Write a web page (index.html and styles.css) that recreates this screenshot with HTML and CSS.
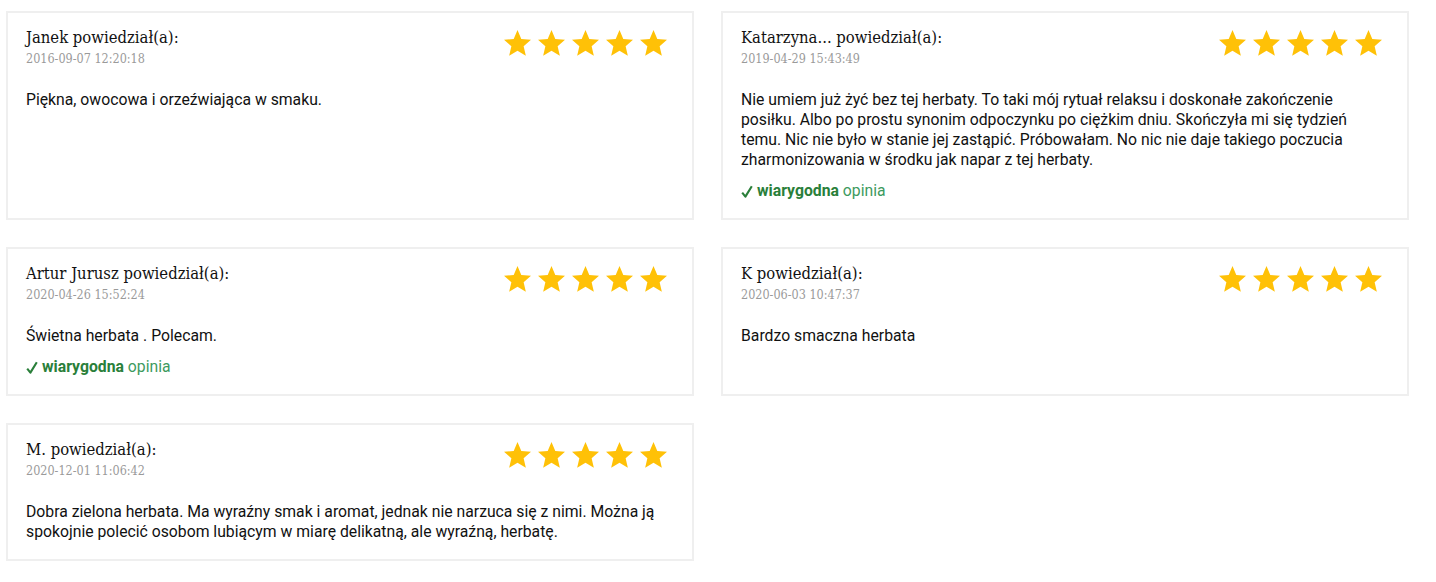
FILE: index.html
```html
<!DOCTYPE html>
<html lang="pl">
<head>
<meta charset="utf-8">
<title>Opinie</title>
<link rel="stylesheet" href="styles.css">
</head>
<body>
<svg width="0" height="0" class="defs">
  <defs>
    <symbol id="star" viewBox="2 2 20 19.2">
      <path d="M12 17.27L18.18 21l-1.64-7.03L22 9.24l-7.19-.61L12 2 9.19 8.63 2 9.24l5.46 4.73L5.82 21z"/>
    </symbol>
    <symbol id="check" viewBox="0 0 12 13">
      <polyline points="1.2,7.6 4.4,11.6 10.8,1.2" fill="none" stroke="currentColor" stroke-width="2.1" stroke-linejoin="round"/>
    </symbol>
  </defs>
</svg>
<div class="reviews">
  <div class="review">
    <div class="head">
      <div class="who">
        <div class="name">Janek powiedział(a):</div>
        <div class="date">2016-09-07 12:20:18</div>
      </div>
      <div class="stars"><svg><use href="#star"/></svg><svg><use href="#star"/></svg><svg><use href="#star"/></svg><svg><use href="#star"/></svg><svg><use href="#star"/></svg></div>
    </div>
    <p class="text">Piękna, owocowa i orzeźwiająca w smaku.</p>
  </div>
  <div class="review">
    <div class="head">
      <div class="who">
        <div class="name">Katarzyna... powiedział(a):</div>
        <div class="date">2019-04-29 15:43:49</div>
      </div>
      <div class="stars"><svg><use href="#star"/></svg><svg><use href="#star"/></svg><svg><use href="#star"/></svg><svg><use href="#star"/></svg><svg><use href="#star"/></svg></div>
    </div>
    <p class="text">Nie umiem już żyć bez tej herbaty. To taki mój rytuał relaksu i doskonałe zakończenie posiłku. Albo po prostu synonim odpoczynku po ciężkim dniu. Skończyła mi się tydzień temu. Nic nie było w stanie jej zastąpić. Próbowałam. No nic nie daje takiego poczucia zharmonizowania w środku jak napar z tej herbaty.</p>
    <div class="verified"><svg class="check"><use href="#check"/></svg><b>wiarygodna</b> opinia</div>
  </div>
  <div class="review">
    <div class="head">
      <div class="who">
        <div class="name">Artur Jurusz powiedział(a):</div>
        <div class="date">2020-04-26 15:52:24</div>
      </div>
      <div class="stars"><svg><use href="#star"/></svg><svg><use href="#star"/></svg><svg><use href="#star"/></svg><svg><use href="#star"/></svg><svg><use href="#star"/></svg></div>
    </div>
    <p class="text">Świetna herbata . Polecam.</p>
    <div class="verified"><svg class="check"><use href="#check"/></svg><b>wiarygodna</b> opinia</div>
  </div>
  <div class="review">
    <div class="head">
      <div class="who">
        <div class="name">K powiedział(a):</div>
        <div class="date">2020-06-03 10:47:37</div>
      </div>
      <div class="stars"><svg><use href="#star"/></svg><svg><use href="#star"/></svg><svg><use href="#star"/></svg><svg><use href="#star"/></svg><svg><use href="#star"/></svg></div>
    </div>
    <p class="text">Bardzo smaczna herbata</p>
  </div>
  <div class="review">
    <div class="head">
      <div class="who">
        <div class="name">M. powiedział(a):</div>
        <div class="date">2020-12-01 11:06:42</div>
      </div>
      <div class="stars"><svg><use href="#star"/></svg><svg><use href="#star"/></svg><svg><use href="#star"/></svg><svg><use href="#star"/></svg><svg><use href="#star"/></svg></div>
    </div>
    <p class="text">Dobra zielona herbata. Ma wyraźny smak i aromat, jednak nie narzuca się z nimi. Można ją spokojnie polecić osobom lubiącym w miarę delikatną, ale wyraźną, herbatę.</p>
  </div>
</div>
</body>
</html>
```

FILE: styles.css
```css
html, body {
  margin: 0;
  padding: 0;
  background: #fff;
}
body {
  font-family: Roboto, "Liberation Sans", sans-serif;
  color: #111;
}
.defs {
  position: absolute;
  width: 0;
  height: 0;
}
.reviews {
  display: grid;
  grid-template-columns: 1fr 1fr;
  column-gap: 27px;
  row-gap: 27px;
  padding: 11px 27px 0 6px;
}
.review {
  border: 2px solid #efefef;
  padding: 14px 18px 17px 18px;
}
.head {
  display: flex;
  justify-content: space-between;
  align-items: flex-start;
}
.name {
  font-family: "DejaVu Serif Condensed", "DejaVu Serif", serif;
  font-stretch: condensed;
  font-size: 16.5px;
  line-height: 22px;
  color: #111;
}
.date {
  font-family: "DejaVu Serif Condensed", "DejaVu Serif", serif;
  font-stretch: condensed;
  font-size: 12.5px;
  line-height: 20px;
  color: #9a9a9a;
}
.stars {
  display: flex;
  gap: 7px;
  margin-top: 3px;
  margin-right: 7px;
}
.stars svg {
  width: 27px;
  height: 26px;
  fill: #ffc107;
}
.text {
  margin: 21px 0 0 0;
  font-size: 15.75px;
  line-height: 20px;
  color: #111;
}
.verified {
  display: flex;
  align-items: center;
  margin-top: 11px;
  font-size: 15.75px;
  line-height: 20px;
  color: #3d9a5e;
  white-space: pre;
}
.verified b {
  color: #2a7f3a;
  font-weight: 700;
}
.check {
  width: 12px;
  height: 13px;
  margin-right: 4px;
  color: #2a7f3a;
}
```
